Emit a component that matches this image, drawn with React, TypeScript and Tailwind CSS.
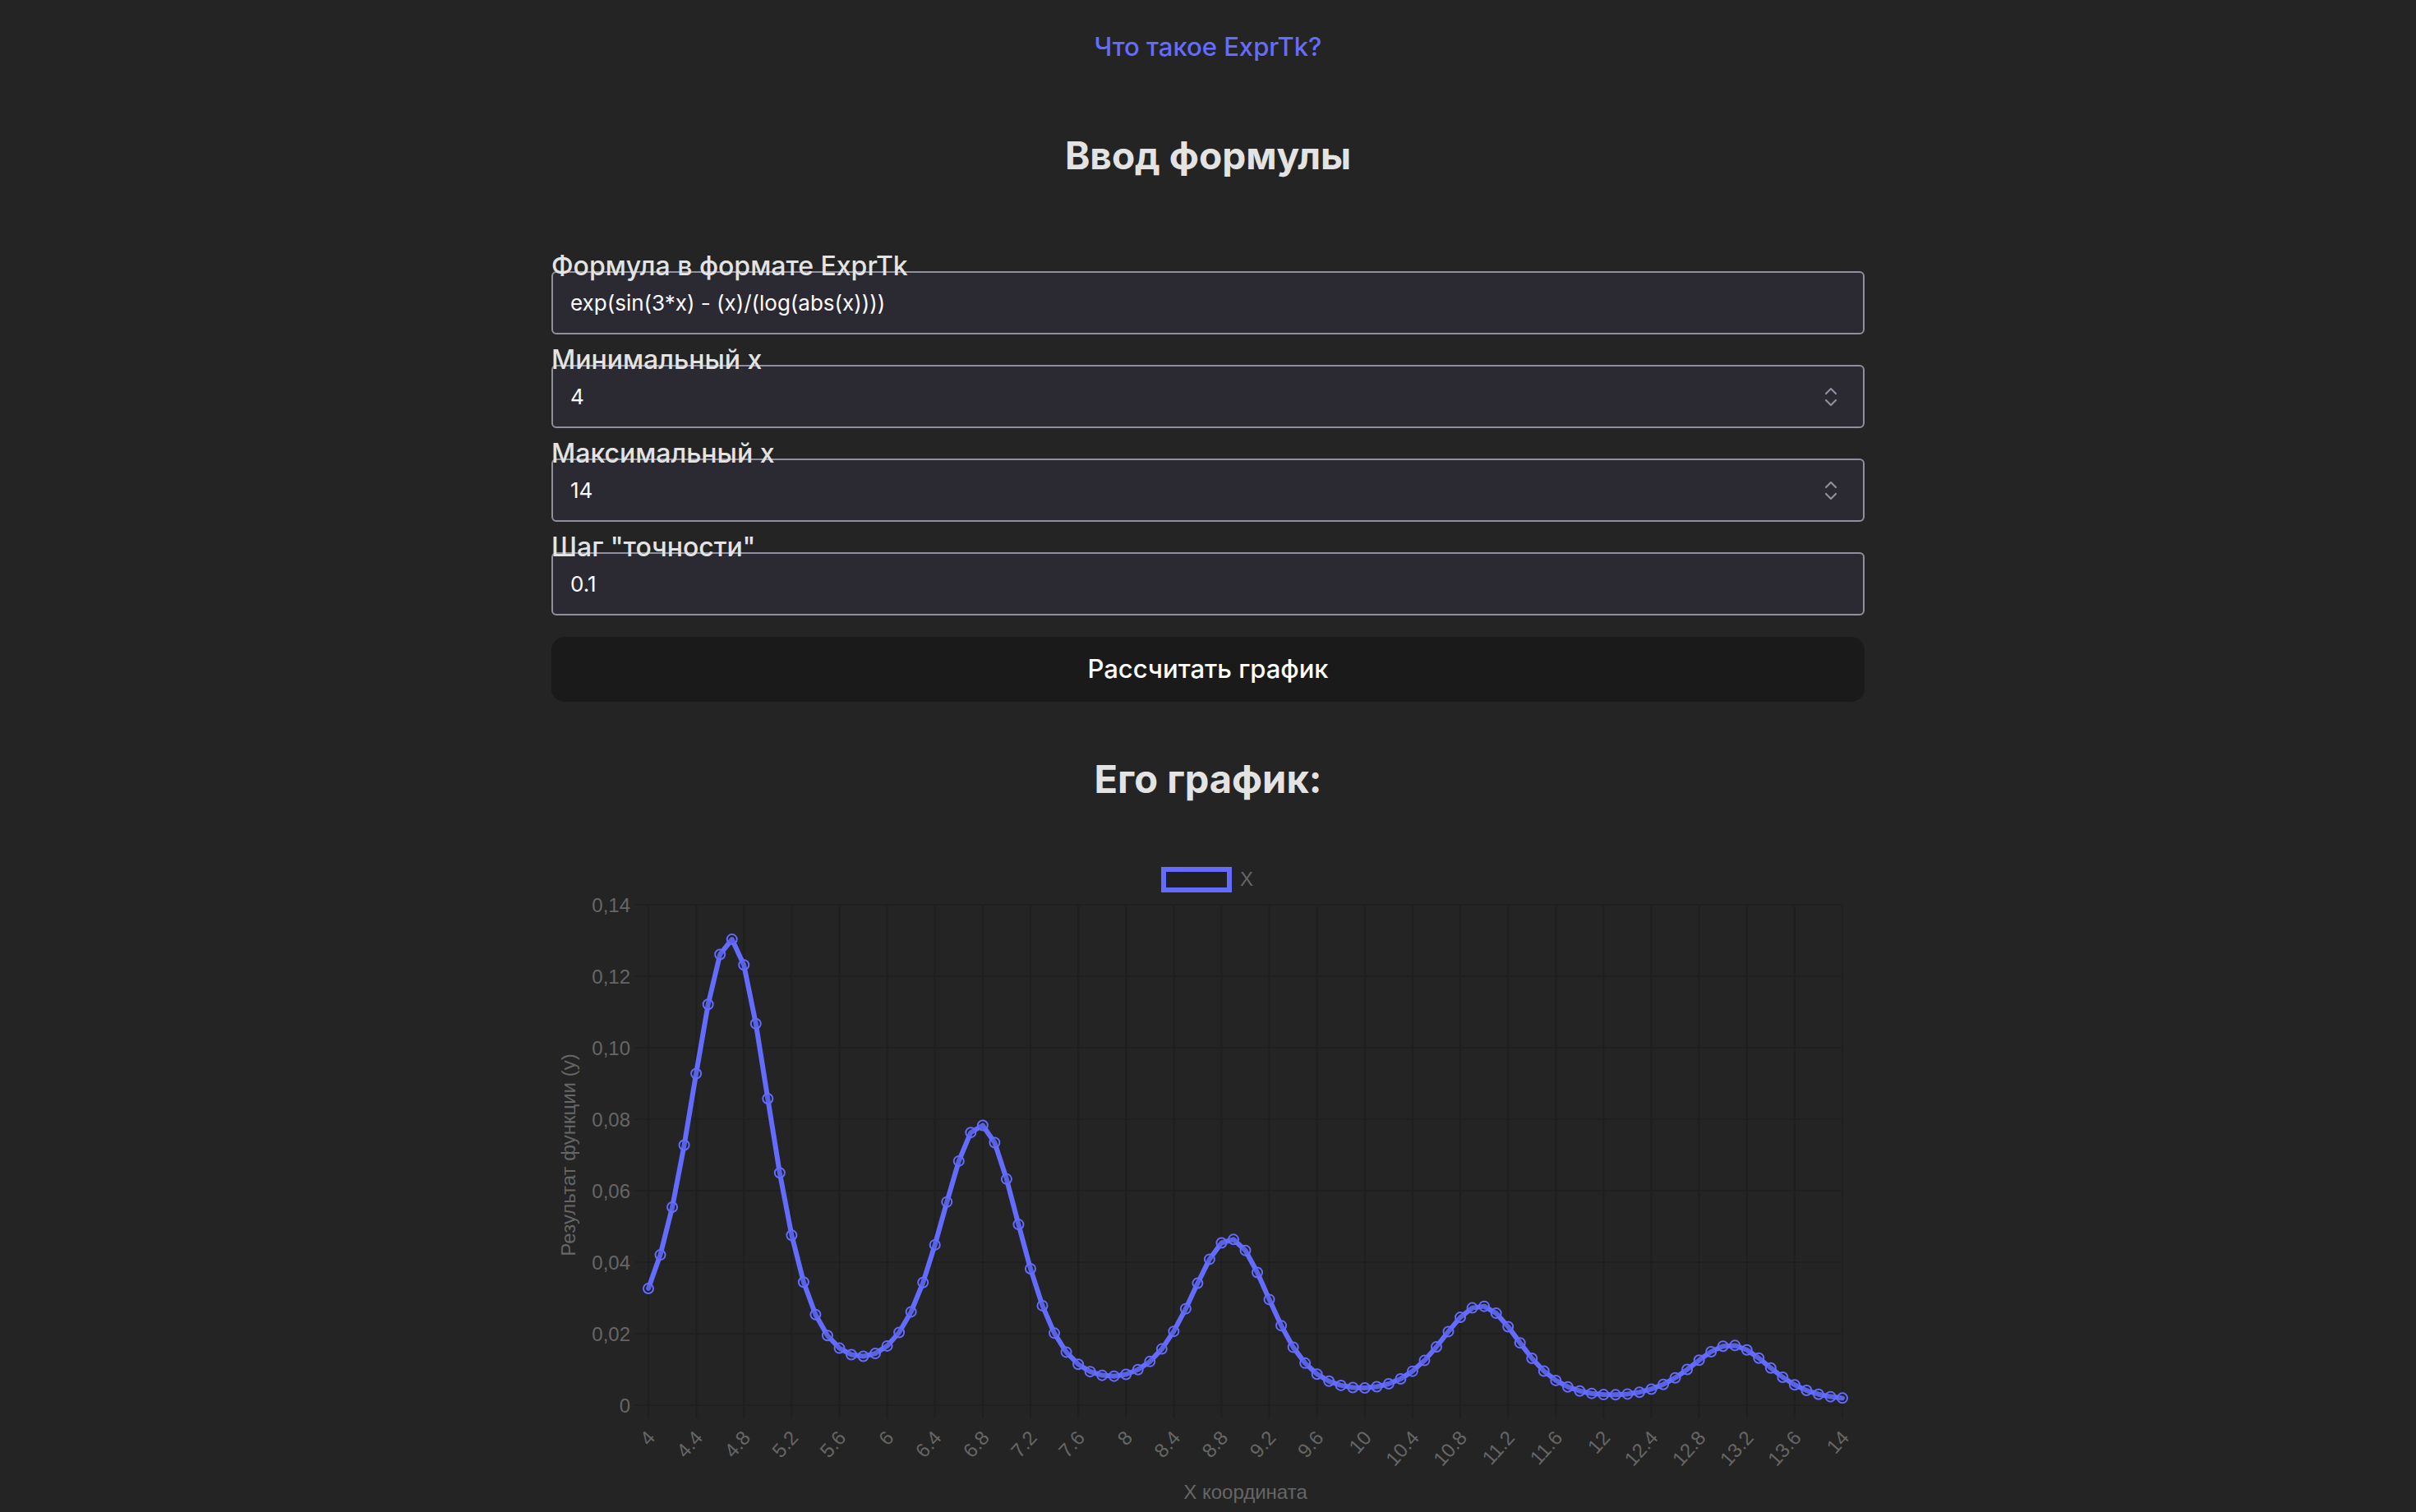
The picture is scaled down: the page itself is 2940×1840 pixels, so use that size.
import React from 'react'

const W = 1598
const H = 800
const LEFT = 118
const RIGHT = 1571
const TOP = 62
const BOTTOM = 671
const Y_MAX = 0.14
const ACCENT = '#646cff'
const GRID = '#1f1f1f'
const TICK = '#666666'
const CHART_FONT = "'Liberation Sans', Arial, sans-serif"

// f(x) = exp(sin(3x) - x / log|x|), x in [4, 14], step 0.1
const points = Array.from({ length: 101 }, (_, i) => {
  const x = 4 + i * 0.1
  return { i, x, y: Math.exp(Math.sin(3 * x) - x / Math.log(Math.abs(x))) }
})

const px = (i: number) => LEFT + (i / 100) * (RIGHT - LEFT)
const py = (v: number) => BOTTOM - (v / Y_MAX) * (BOTTOM - TOP)

const yTicks = [0, 0.02, 0.04, 0.06, 0.08, 0.1, 0.12, 0.14]
const xTicks = points.filter((p) => p.i % 4 === 0)

function Chart() {
  const line = points.map((p, k) => `${k === 0 ? 'M' : 'L'}${px(p.i).toFixed(1)} ${py(p.y).toFixed(1)}`).join(' ')

  return (
    <svg width={W} height={H} viewBox={`0 0 ${W} ${H}`} className="mt-[69px] block">
      {/* legend */}
      <rect x={745} y={19} width={80} height={25} fill="rgba(0,0,0,0.1)" stroke={ACCENT} strokeWidth={6} />
      <text x={838} y={39} fontSize={24} fill={TICK} fontFamily={CHART_FONT}>
        X
      </text>

      {/* grid */}
      {yTicks.map((t) => (
        <line key={t} x1={LEFT - 16} x2={RIGHT} y1={py(t)} y2={py(t)} stroke={GRID} strokeWidth={2} />
      ))}
      {xTicks.map((p) => (
        <line key={p.i} x1={px(p.i)} x2={px(p.i)} y1={TOP} y2={BOTTOM + 16} stroke={GRID} strokeWidth={2} />
      ))}

      {/* y ticks */}
      {yTicks.map((t) => (
        <text
          key={t}
          x={96}
          y={py(t) + 9}
          fontSize={24}
          fill={TICK}
          textAnchor="end"
          fontFamily={CHART_FONT}
        >
          {t === 0 ? '0' : t.toFixed(2).replace('.', ',')}
        </text>
      ))}
      <text
        transform={`translate(29 ${(TOP + BOTTOM) / 2}) rotate(-90)`}
        fontSize={24}
        fill={TICK}
        textAnchor="middle"
        fontFamily={CHART_FONT}
      >
        Результат функции (y)
      </text>

      {/* x ticks */}
      {xTicks.map((p) => (
        <text
          key={p.i}
          transform={`translate(${px(p.i) + 3} 706) rotate(-48)`}
          fontSize={24}
          fill={TICK}
          textAnchor="end"
          dominantBaseline="central"
          fontFamily={CHART_FONT}
        >
          {String(Number(p.x.toFixed(1)))}
        </text>
      ))}
      <text x={(LEFT + RIGHT) / 2} y={785} fontSize={24} fill={TICK} textAnchor="middle" fontFamily={CHART_FONT}>
        X координата
      </text>

      {/* data */}
      <path d={line} fill="none" stroke={ACCENT} strokeWidth={6} strokeLinejoin="round" strokeLinecap="round" />
      {points.map((p) => (
        <circle key={p.i} cx={px(p.i)} cy={py(p.y)} r={6} fill="rgba(0,0,0,0.1)" stroke={ACCENT} strokeWidth={2} />
      ))}
    </svg>
  )
}

function Spinner() {
  return (
    <svg
      width="16"
      height="26"
      viewBox="0 0 16 26"
      className="pointer-events-none absolute right-[33px] top-1/2 -translate-y-1/2"
      fill="none"
      stroke="#8f8f9d"
      strokeWidth="2.2"
      strokeLinecap="round"
      strokeLinejoin="round"
    >
      <path d="M2 9 L8 3 L14 9" />
      <path d="M2 17 L8 23 L14 17" />
    </svg>
  )
}

function Field({ label, value, number }: { label: string; value: string; number?: boolean }) {
  return (
    <div className="flex flex-col">
      <label className="relative top-[3px] z-10 -mb-[7px] text-[32px] font-medium leading-none text-[#e3e3e3]">
        {label}
      </label>
      <div className="relative">
        <input
          readOnly
          value={value}
          className="box-border block h-[77px] w-full rounded-[6px] border-2 border-[#8f8f9d] bg-[#2b2a33] px-[21px] font-['Inter',sans-serif] text-[26px] text-[#fbfbfe] outline-none"
        />
        {number && <Spinner />}
      </div>
    </div>
  )
}

export default function App() {
  return (
    <div className="min-h-screen bg-[#242424] font-['Inter','Noto_Sans',sans-serif] text-[#e3e3e3]">
      <div className="mx-auto flex w-[1598px] flex-col items-center pt-[41px]">
        <a href="#" className="text-[31px] font-medium leading-[32px] text-[#646cff]">
          Что такое ExprTk?
        </a>

        <h1 className="mt-[94px] text-[46px] font-bold leading-[44px] text-[#e3e3e3]">Ввод формулы</h1>

        <form className="mt-[94px] flex w-full flex-col gap-[12px]" onSubmit={(e) => e.preventDefault()}>
          <Field label="Формула в формате ExprTk" value="exp(sin(3*x) - (x)/(log(abs(x))))" />
          <Field label="Минимальный x" value="4" number />
          <Field label="Максимальный x" value="14" number />
          <Field label={'Шаг "точности"'} value="0.1" />
          <button
            type="submit"
            className="mt-[14px] h-[79px] w-full rounded-[16px] border-2 border-transparent bg-[#1a1a1a] text-[31px] font-medium text-white"
          >
            Рассчитать график
          </button>
        </form>

        <h2 className="mt-[72px] text-[47px] font-bold leading-[44px] text-[#e3e3e3]">Его график:</h2>

        <Chart />
      </div>
    </div>
  )
}
